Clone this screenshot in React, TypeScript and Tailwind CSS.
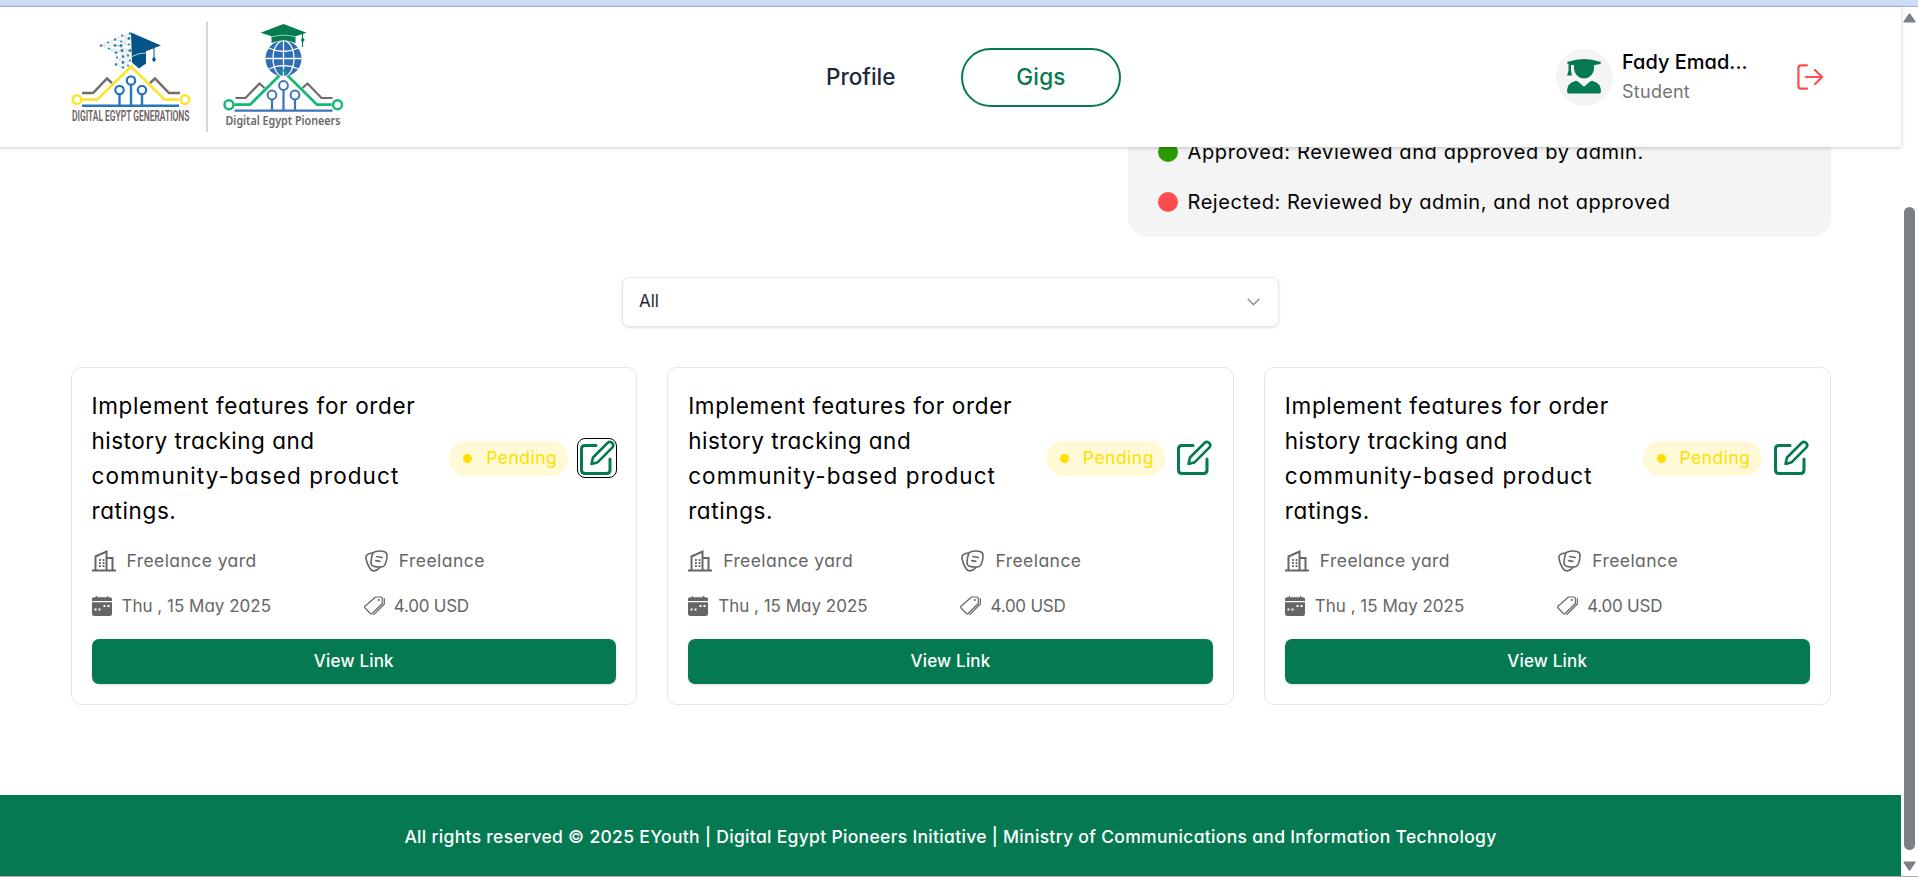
function GenerationsLogo() {
  const dots: [number, number, number][] = [
    [41, 46, 1.3], [48, 43, 1.1], [49, 49, 1.1], [55, 40, 1.3], [55, 46, 1.5], [56, 53, 1.4], [62, 36, 1.2], [61, 42, 1.1],
    [61, 46, 1.7], [62, 51, 1.6], [57, 58, 1.2], [63, 57, 1.5], [56, 65, 1.4], [63, 63, 1.6], [63, 68, 1.3], [70, 34, 1.4],
    [69, 39, 1.6], [69, 45, 1.2], [70, 51, 1.6], [68, 56, 1.3], [70, 61, 1.2], [68, 66, 1.1],
  ];
  return (
    <svg width="120" height="92" viewBox="0 0 120 92" className="shrink-0 overflow-visible">
      <g transform="translate(-11 -31.5)">
        <path d="M41 46 L55 40 L70 34 M41 46 L56 53 L70 51 L55 46 L41 46 M55 40 L69 45 L55 46 M62 36 L69 39 L61 42 M56 53 L57 58 L63 63 L70 61 L63 57 L56 65 L63 68 L70 61 M62 51 L63 57 L70 51 M48 43 L61 46 L69 39 M49 49 L62 51" stroke="#a9cbe0" strokeWidth=".6" fill="none" />
        {dots.map(([x, y, r]) => (
          <circle key={`${x}-${y}`} cx={x} cy={y} r={r * 0.9} fill="#2d7fae" />
        ))}
        <path d="M71 33 L101 46 L86 51.5 V64 L79 69 L72 63 Z" fill="#035587" />
        <path d="M86 51 L94 48 V60" stroke="#035587" strokeWidth="1" fill="none" />
        <path d="M72 57 Q79 53 86 53.500" stroke="#fff" strokeWidth=".7" fill="none" />
        <ellipse cx="94" cy="60" rx="1.700" ry="2.300" fill="#035587" />
      </g>
      <path d="M11 62 H22 L36 47.500 L41 52 M79 52 L84 47.500 L98 62 H109" fill="none" stroke="#706b69" strokeWidth="2.400" />
      <path d="M11 68.500 H26.500 L60 35.500 L93.500 68.500 H108" fill="none" stroke="#fde428" strokeWidth="2.600" />
      <circle cx="6" cy="68.500" r="4.300" fill="#fff" stroke="#fde428" strokeWidth="2.400" />
      <circle cx="114" cy="68.500" r="4.300" fill="#fff" stroke="#fde428" strokeWidth="2.400" />
      <path d="M11 74.700 H108 M48.500 74 V63 M60 74 V54 M71 74 V63" stroke="#2576bd" strokeWidth="2.400" />
      <g fill="#fff" stroke="#2576bd" strokeWidth="2.200">
        <circle cx="48.500" cy="59" r="4.200" />
        <circle cx="60" cy="49.500" r="4.200" />
        <circle cx="71" cy="59" r="4.200" />
      </g>
      <text x="1" y="90" textLength="117.500" lengthAdjust="spacingAndGlyphs" fontFamily="Roboto, sans-serif" fontWeight="600" fontSize="13.800" fill="#68615f">DIGITAL EGYPT GENERATIONS</text>
    </svg>
  );
}

function PioneersLogo() {
  return (
    <svg width="122" height="106" viewBox="0 0 122 106" className="shrink-0 overflow-visible">
      <g transform="translate(0.500 0)">
        <circle cx="60" cy="34.500" r="18" fill="#2f6fb1" />
        <g fill="none" stroke="#fff" strokeWidth="1.300">
          <path d="M60 16 V53 M42 34.500 H78 M45 24 Q60 31 75 24 M45 45 Q60 38 75 45" />
          <ellipse cx="60" cy="34.500" rx="10.500" ry="18" />
        </g>
        <path d="M48 11 L60 8 L72 11 V19 Q60 13.500 48 19 Z" fill="#047c50" />
        <path d="M37 8.700 L60 0 L83 8.700 L72 12.200 Q60 9 48 12.200 Z" fill="#047c50" />
        <path d="M48 12.800 Q60 9.600 72 12.800" fill="none" stroke="#d9efe4" strokeWidth=".7" />
        <path d="M79 9 V23" stroke="#047c50" strokeWidth="1.200" />
        <circle cx="79.300" cy="16" r="1.700" fill="#047c50" />
        <path d="M12 74 H22 L36 59.500 L41 64 M79 64 L84 59.500 L98 74 H109" fill="none" stroke="#706b69" strokeWidth="2.200" />
        <path d="M11 80.700 H26.500 L56 51.500 M64 51.500 L93.500 80.700 H108" fill="none" stroke="#14b778" strokeWidth="2.700" />
        <path d="M57.500 49 L60 46.500 L62.500 49" fill="none" stroke="#14b778" strokeWidth="1.800" />
        <circle cx="5.500" cy="80.700" r="4.500" fill="#fff" stroke="#14b778" strokeWidth="2.500" />
        <circle cx="114" cy="80.700" r="4.500" fill="#fff" stroke="#14b778" strokeWidth="2.500" />
        <path d="M11 86.700 H109 M48.500 86 V75 M60 86 V66 M71.500 86 V75" stroke="#3d74b9" strokeWidth="2.200" />
        <g fill="#fff" stroke="#3d74b9" strokeWidth="2">
          <circle cx="48.500" cy="71" r="4.400" />
          <circle cx="60" cy="61.500" r="4.400" />
          <circle cx="71.500" cy="71" r="4.400" />
        </g>
        <text x="2" y="100.500" textLength="115" lengthAdjust="spacingAndGlyphs" fontFamily="'Noto Sans', sans-serif" fontWeight="600" fontSize="12.200" fill="#6c6768">Digital Egypt Pioneers</text>
      </g>
    </svg>
  );
}

function StudentIcon() {
  return (
    <svg width="34" height="35" viewBox="0 0 34 35" fill="#057a52" className="-ml-px -mt-px">
      <path d="M0 3.800 Q0 3 1 2.700 Q9 .3 17 0 Q25 .3 33 2.700 Q34 3 34 3.800 Q34 4.600 33 4.900 L27 6.200 V9.500 A10 10 0 0 1 7 9.500 V6.200 L4 5.700 V12 L5 16.500 H0 L1.500 12 V5 Q0 4.700 0 3.800 Z" />
      <path d="M9 21.800 Q10.500 22 11.500 23 L17 27.800 L22.500 23 Q23.500 22 25 21.800 Q34 24 34 32.500 Q34 34.500 32 34.500 H2 Q0 34.500 0 32.500 Q0 24 9 21.800 Z" />
    </svg>
  );
}

function LogoutIcon() {
  return (
    <svg width="27" height="26" viewBox="0 0 27 26" fill="none" stroke="#ff4d4f" strokeWidth="2.200" strokeLinecap="round" strokeLinejoin="round">
      <path d="M10 1.300 H4 Q1.400 1.300 1.400 4 V22 Q1.400 24.700 4 24.700 H10 M8.800 13 H25 M18 6 L25.200 13 L18 20" />
    </svg>
  );
}

function BuildingIcon() {
  return (
    <svg width="24" height="22" viewBox="0 0 24 22" fill="none" stroke="#666" strokeWidth="2" className="shrink-0">
      <path d="M0 20.500 H24 M3.500 20 V6.500 L14.500 1.500 V20 M14.500 8 H20.500 V20" />
      <path d="M7 10 H8.800 M10.600 10 H12.400 M7 13 H8.800 M10.600 13 H12.400 M7 16 H8.800 M10.600 16 H12.400" strokeWidth="1.800" />
    </svg>
  );
}

function CardsIcon() {
  return (
    <svg width="23" height="22" viewBox="0 0 23 22" fill="none" stroke="#666" strokeWidth="1.600" strokeLinecap="round" strokeLinejoin="round" className="shrink-0">
      <path d="M9.800 1.800 Q14.500 .2 19 1.600 Q22.300 2.600 22 6 Q22 10.500 20.300 14 Q19 17 16 17 Q12 17.300 8.500 16.200 Q5.900 15.200 6 12.500 Q6.200 8 7.500 4 Q8.200 2.300 9.800 1.800 Z" />
      <path d="M7.500 3 Q4.500 3.200 2.300 4.700 Q.6 6 1 8.500 Q1.800 14 5 18.500 Q6.500 21 9 20.900 Q12.500 20.500 15 17.500 M11.800 6.500 L17.200 7.500 M10.800 10.600 L14.800 11.400" />
    </svg>
  );
}

function CalendarIcon() {
  return (
    <svg width="20" height="20" viewBox="0 0 20 20" fill="#666" className="shrink-0">
      <path d="M0 5 V3 Q0 1.200 2 1.200 H3.800 V0 H5 V1.200 H15 V0 H16.200 V1.200 H18 Q20 1.200 20 3 V5 Z M0 6.300 H20 V17.500 Q20 20 17.500 20 H2.500 Q0 20 0 17.500 Z" />
      <path d="M2.500 12.500 h2 v2 h-2 Z M6.500 12.500 h2 v2 h-2 Z M11.500 9 h2 v2 h-2 Z M15.500 9 h2 v2 h-2 Z" fill="#fff" />
    </svg>
  );
}

function TagIcon() {
  return (
    <svg width="21" height="20" viewBox="0 0 21 20" fill="none" stroke="#666" strokeWidth="1.200" strokeLinejoin="round" strokeLinecap="round" className="shrink-0">
      <path d="M11.500 1 H17 Q18.300 1 18.300 2.300 V7.500 L8.200 17.500 Q7.300 18.300 6.400 17.500 L1 12 Q.3 11 1 10.200 Z M20.300 2.500 V8 L9.800 18.600" />
      <circle cx="14.800" cy="4" r="1.100" fill="#666" stroke="none" />
    </svg>
  );
}

function EditIcon() {
  return (
    <svg width="36" height="36" viewBox="0 0 36 36" fill="none" stroke="#057a52" strokeWidth="3" strokeLinecap="round" strokeLinejoin="round">
      <path d="M17 5.500 H6 Q2.500 5.500 2.500 9 V30 Q2.500 33.500 6 33.500 H27.500 Q31 33.500 31 30 V19" />
      <path d="M12.500 24 L14 17.500 L28.500 3 Q31 .8 33.200 3 Q35.400 5.200 33.200 7.700 L18.800 22.200 Z" strokeWidth="2.600" />
    </svg>
  );
}

function GigCard({ focused }: { focused: boolean }) {
  return (
    <article className="flex h-[338px] flex-col rounded-[10px] border border-[#e6e6e6] bg-white px-5 pt-5">
      <div className="flex h-[140px] items-center justify-between">
        <h2 className="w-[345px] text-[22.500px] leading-[35px] text-black">
          <span className="tracking-[0.660px]">Implement features for order</span>
          <br />
          <span className="tracking-[0.490px]">history tracking and</span>
          <br />
          <span className="tracking-[1.080px]">community-based product</span>
          <br />
          <span className="tracking-[0.600px]">ratings.</span>
        </h2>
        <div className="flex items-center gap-[9px]">
          <div className="flex h-[35px] w-[119px] items-center rounded-full bg-[#fff9d5] pl-[14px] text-[17.500px] text-[#ffdf00]">
            <span className="mr-[14px] size-[9px] rounded-full bg-[#ffdf00]" />
            <span className="pt-px tracking-[0.480px]">Pending</span>
          </div>
          <button
            className={
              focused
                ? "-mr-px flex size-10 items-center justify-center rounded-[8px] border-[1.500px] border-black"
                : "-mr-px flex size-10 items-center justify-center"
            }
          >
            <EditIcon />
          </button>
        </div>
      </div>
      <div className="mt-[15px] grid grid-cols-2 gap-x-5 text-[17.500px] leading-[30px] text-[#666]">
        <div className="flex h-[45px] items-center gap-[11px] pb-[9px]">
          <BuildingIcon />
          <span className="tracking-[0.420px]">Freelance yard</span>
        </div>
        <div className="flex h-[45px] items-center gap-[11px] pb-[9px] pl-px">
          <CardsIcon />
          <span className="tracking-[0.440px]">Freelance</span>
        </div>
        <div className="flex h-[45px] items-center gap-[10px] pb-[9px]">
          <CalendarIcon />
          <span className="text-[17px]">Thu , 15 May 2025</span>
        </div>
        <div className="flex h-[45px] items-center gap-[9px] pb-[9px]">
          <TagIcon />
          <span className="text-[17px] tracking-[-0.240px]">4.00 USD</span>
        </div>
      </div>
      <button className="mt-[6px] flex h-[45px] items-center justify-center rounded-[7px] bg-[#057a52] text-[17px] font-medium tracking-[0.180px] text-white shadow-sm">
        View Link
      </button>
    </article>
  );
}

export default function App() {
  return (
    <div className="flex h-[877px] w-full flex-col overflow-hidden border-b border-[#b5aaa6] bg-white font-['Inter',sans-serif] [font-feature-settings:'cv11']">
      <div className="h-[7px] shrink-0 border-b border-[#a3b0ce] bg-[#cbdcf7]" />
      <div className="flex min-h-0 flex-1">
        <div className="flex min-w-0 flex-1 flex-col">
          <header className="relative z-10 flex h-[140px] shrink-0 items-center bg-white pl-[71px] pr-[77px] shadow-[0_1px_4px_rgba(0,0,0,0.22)]">
            <div className="flex w-[755px] items-center">
              <GenerationsLogo />
              <div className="ml-[15px] mr-[15px] h-[110px] w-[2px] bg-[#d4d4d4]" />
              <PioneersLogo />
            </div>
            <nav className="flex items-center text-[22.500px] font-medium">
              <a className="w-[135px] text-[#1e293b]">Profile</a>
              <a className="flex h-[59px] w-[160px] items-center justify-center rounded-full border-2 border-[#057a52] tracking-[0.200px] text-[#057a52]">
                Gigs
              </a>
            </nav>
            <div className="ml-auto flex items-center">
              <div className="flex size-[57px] items-center justify-center rounded-full bg-[#f4f4f4]">
                <StudentIcon />
              </div>
              <div className="ml-[9px] w-[175px]">
                <p className="text-[20px] font-medium leading-[29px] text-black">Fady Emad...</p>
                <p className="text-[18px] leading-[29px] tracking-[0.270px] text-[#757575]">Student</p>
              </div>
              <LogoutIcon />
            </div>
          </header>
          <main className="flex h-[648px] shrink-0 flex-col px-[70.500px]">
            <section className="flex h-[90px] w-[703px] flex-col gap-5 self-end rounded-b-[20px] bg-[#f4f4f4] pl-[30px] text-[20px] text-black">
              <div className="-mt-[10px] flex h-[30px] items-center gap-[10px]">
                <span className="size-5 rounded-full bg-[#2a9a00]" />
                <span className="tracking-[0.620px]">Approved: Reviewed and approved by admin.</span>
              </div>
              <div className="flex h-[30px] items-center gap-[10px]">
                <span className="size-5 rounded-full bg-[#ff4d4f]" />
                <span className="tracking-[0.565px]">Rejected: Reviewed by admin, and not approved</span>
              </div>
            </section>
            <div className="mt-10 flex h-[50px] w-[657px] items-center justify-between self-center rounded-[7px] border border-[#e5e5e5] pl-4 pr-[18px] text-[17px] text-[#1f2937] shadow-sm">
              <span>All</span>
              <svg width="13" height="8" viewBox="0 0 13 8" fill="none" stroke="#8b9099" strokeWidth="1.500">
                <path d="M.7 .8 L6.500 6.700 L12.300 .8" />
              </svg>
            </div>
            <section className="mt-10 grid grid-cols-3 gap-[30px]">
              <GigCard focused />
              <GigCard focused={false} />
              <GigCard focused={false} />
            </section>
          </main>
          <footer className="flex min-h-0 flex-1 items-center justify-center bg-[#057a52] pt-[3px] text-[17.500px] font-medium tracking-[0.310px] text-white">
            All rights reserved © 2025 EYouth | Digital Egypt Pioneers Initiative | Ministry of Communications and Information Technology
          </footer>
        </div>
        <div className="flex w-[17px] shrink-0 flex-col items-center bg-white">
          <svg width="13" height="10" viewBox="0 0 13 10" className="mt-[6px] shrink-0">
            <path d="M1 9.500 Q0 9.500 .5 8.500 L5.500 1 Q6.500 0 7.500 1 L12.500 8.500 Q13 9.500 12 9.500 Z" fill="#7b8087" />
          </svg>
          <div className="mt-[184px] h-[643px] w-[11px] shrink-0 rounded-full bg-[#7b8087]" />
          <svg width="13" height="10" viewBox="0 0 13 10" className="mt-[11px] shrink-0">
            <path d="M1 .5 Q0 .5 .5 1.500 L5.500 9 Q6.500 10 7.500 9 L12.500 1.500 Q13 .5 12 .5 Z" fill="#7b8087" />
          </svg>
        </div>
      </div>
    </div>
  );
}
